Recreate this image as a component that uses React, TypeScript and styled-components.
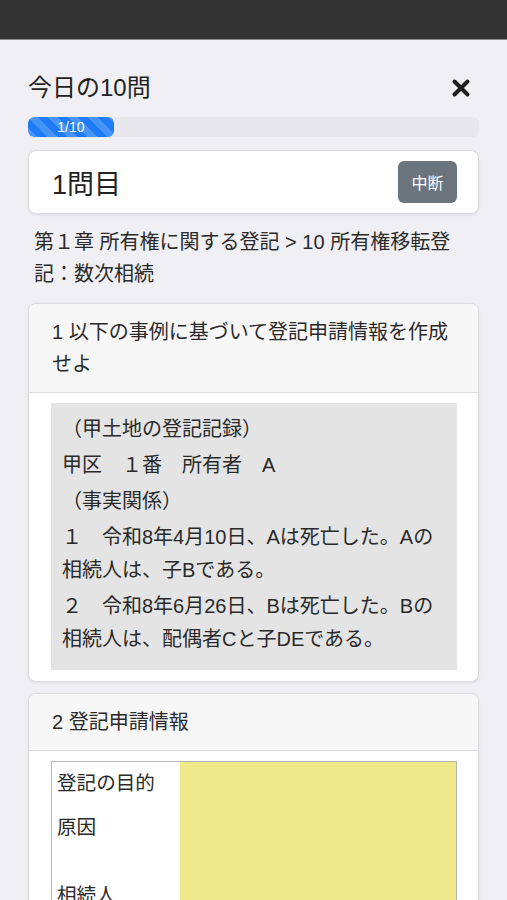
import styled, { createGlobalStyle } from 'styled-components';

const GlobalStyle = createGlobalStyle`
  body {
    margin: 0;
    background: #efeff4;
    font-family: "Liberation Sans", "Noto Sans CJK JP", sans-serif;
    color: #222;
  }
`;

const TopBar = styled.div`
  height: 39px;
  background: #333333;
  border-bottom: 1px solid #8c8c8c;
`;

const Main = styled.main`
  padding: 0 28px 40px;
`;

const TitleRow = styled.div`
  display: flex;
  align-items: center;
  justify-content: space-between;
  padding-top: 32px;
`;

const Title = styled.h1`
  margin: 0;
  font-size: 24px;
  font-weight: 400;
  line-height: 32px;
  color: #222;
`;

const CloseButton = styled.button`
  border: 0;
  background: none;
  padding: 0;
  margin-right: 8px;
  width: 20px;
  height: 20px;
  display: flex;
  align-items: center;
  justify-content: center;
  cursor: pointer;
`;

const Track = styled.div`
  margin-top: 13px;
  height: 20px;
  border-radius: 6px;
  background: #e7e7ec;
  overflow: hidden;
`;

const Fill = styled.div`
  height: 100%;
  border-radius: 6px;
  background-color: #1f7cf6;
  background-image: linear-gradient(
    45deg,
    rgba(255, 255, 255, 0.18) 25%,
    transparent 25%,
    transparent 50%,
    rgba(255, 255, 255, 0.18) 50%,
    rgba(255, 255, 255, 0.18) 75%,
    transparent 75%,
    transparent
  );
  background-size: 20px 20px;
  color: #fff;
  font-size: 14px;
  line-height: 20px;
  text-align: center;
`;

const Card = styled.section`
  margin-top: 11px;
  background: #fff;
  border: 1px solid #dcdce0;
  border-radius: 8px;
  box-shadow: 0 1px 3px rgba(0, 0, 0, 0.08);
  overflow: hidden;
`;

const QuestionBar = styled(Card)`
  margin-top: 13px;
  height: 62px;
  display: flex;
  align-items: center;
  justify-content: space-between;
  padding: 0 21px 0 23px;
`;

const QuestionNo = styled.div`
  font-size: 27px;
  color: #222;
`;

const StopButton = styled.button`
  width: 59px;
  height: 42px;
  border: 0;
  border-radius: 6px;
  background: #6c757d;
  color: #fff;
  font-family: inherit;
  font-size: 16px;
`;

const Crumb = styled.p`
  margin: 12px 0 13px;
  padding: 0 6px;
  font-size: 20px;
  line-height: 32px;
  color: #2a2a2a;
`;

const CardHeader = styled.div`
  padding: 12px 23px;
  background: #f7f7f8;
  border-bottom: 1px solid #dcdce0;
  font-size: 20px;
  line-height: 32px;
  color: #2a2a2a;
`;

const CardBody = styled.div`
  padding: 10px 21px 11px 22px;
`;

const CaseBox = styled.div`
  background: #e4e4e4;
  padding: 10px 16px 11px 11px;
`;

const CaseLine = styled.p`
  margin: 0 0 3px;
  font-size: 20px;
  line-height: 33px;
  color: #2a2a2a;
`;

const FormTable = styled.div`
  display: grid;
  grid-template-columns: 128px 1fr;
  border: 1px solid #b5b5b5;
  min-height: 220px;
`;

const Labels = styled.div`
  display: flex;
  flex-direction: column;
  background: #fff;
`;

const Label = styled.div<{ $h: number }>`
  height: ${(p) => p.$h}px;
  padding: 0 5px;
  font-size: 19.6px;
  line-height: 42px;
  color: #2a2a2a;
`;

const Answer = styled.div`
  background: #eee98a;
`;

const XIcon = () => (
  <svg width="20" height="20" viewBox="0 0 20 20">
    <path d="M3.5 3.5 L16.5 16.5 M16.5 3.5 L3.5 16.5" stroke="#1e1e1e" strokeWidth="4" strokeLinecap="round" />
  </svg>
);

const facts = [
  '（甲土地の登記記録）',
  '甲区　１番　所有者　A',
  '（事実関係）',
  '１　令和8年4月10日、Aは死亡した。Aの相続人は、子Bである。',
  '２　令和8年6月26日、Bは死亡した。Bの相続人は、配偶者Cと子DEである。',
];

const labels: [string, number][] = [
  ['登記の目的', 44],
  ['原因', 44],
  ['', 24],
  ['相続人', 44],
  ['', 44],
];

export default function App() {
  const current = 1;
  const total = 10;
  return (
    <>
      <GlobalStyle />
      <TopBar />
      <Main>
        <TitleRow>
          <Title>今日の10問</Title>
          <CloseButton aria-label="閉じる">
            <XIcon />
          </CloseButton>
        </TitleRow>
        <Track>
          <Fill style={{ width: `${Math.max((current / total) * 100, 19)}%` }}>
            {current}/{total}
          </Fill>
        </Track>
        <QuestionBar as="div">
          <QuestionNo>{current}問目</QuestionNo>
          <StopButton>中断</StopButton>
        </QuestionBar>
        <Crumb>第１章 所有権に関する登記 &gt; 10 所有権移転登記：数次相続</Crumb>
        <Card>
          <CardHeader>1 以下の事例に基づいて登記申請情報を作成せよ</CardHeader>
          <CardBody>
            <CaseBox>
              {facts.map((f) => (
                <CaseLine key={f}>{f}</CaseLine>
              ))}
            </CaseBox>
          </CardBody>
        </Card>
        <Card>
          <CardHeader>2 登記申請情報</CardHeader>
          <CardBody>
            <FormTable>
              <Labels>
                {labels.map(([t, h], i) => (
                  <Label key={i} $h={h}>
                    {t}
                  </Label>
                ))}
              </Labels>
              <Answer />
            </FormTable>
          </CardBody>
        </Card>
      </Main>
    </>
  );
}
